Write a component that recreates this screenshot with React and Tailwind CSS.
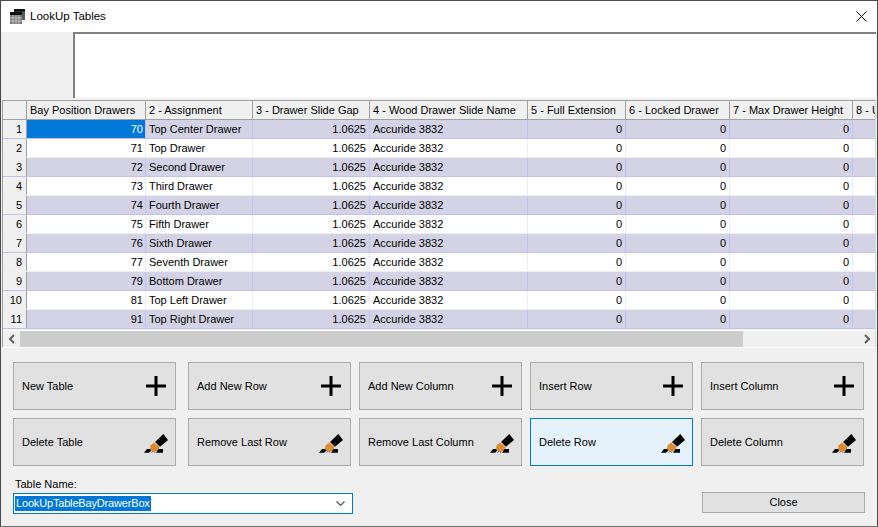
const columns = [
  { title: "Bay Position Drawers", w: "w-[119px]" },
  { title: "2 - Assignment", w: "w-[107px]" },
  { title: "3 - Drawer Slide Gap", w: "w-[117px]" },
  { title: "4 - Wood Drawer Slide Name", w: "w-[158px]" },
  { title: "5 - Full Extension", w: "w-[98px]" },
  { title: "6 - Locked Drawer", w: "w-[104px]" },
  { title: "7 - Max Drawer Height", w: "w-[123px]" },
  { title: "8 - Use", w: "flex-1" },
];

const rows = [
  [70, "Top Center Drawer"],
  [71, "Top Drawer"],
  [72, "Second Drawer"],
  [73, "Third Drawer"],
  [74, "Fourth Drawer"],
  [75, "Fifth Drawer"],
  [76, "Sixth Drawer"],
  [77, "Seventh Drawer"],
  [79, "Bottom Drawer"],
  [81, "Top Left Drawer"],
  [91, "Top Right Drawer"],
];

function Plus() {
  return (
    <svg width="20" height="20" viewBox="0 0 20 20" className="shrink-0">
      <path d="M8.5 0h3v20h-3z M0 8.5h20v3H0z" fill="#000" />
    </svg>
  );
}

function Eraser() {
  return (
    <svg width="24" height="19" viewBox="0 0 24 19" className="shrink-0 -mr-[2px] mt-[2px]">
      <path d="M11 8 L19.3 0 L24 6 L16 12.7 Z" fill="#000" />
      <path d="M10 8.5 L15.5 13 L14 16.5 L9.5 18 L6 15 L6.5 11.5 Z" fill="#df8b2e" />
      <path d="M3 15 H6 L7.5 16.5 L5 18.8 H0 Z" fill="#000" />
      <path d="M14.5 15 H19 V18.8 H12 Z" fill="#000" />
      <path d="M7.5 18.8 L8.8 17 M10.5 18.8 L11 17" stroke="#777" strokeWidth="1" />
    </svg>
  );
}

function ActionButton({ label, icon, active, className = "" }) {
  return (
    <div
      className={`h-[48px] w-[163px] flex items-center justify-between pl-[8px] pr-[9px] border ${
        active ? "border-[#0078d7] bg-[#e5f1fb]" : "border-[#adadad] bg-[#e1e1e1]"
      } ${className}`}
    >
      <span>{label}</span>
      {icon === "plus" ? <Plus /> : <Eraser />}
    </div>
  );
}

function Row({ index, data }) {
  const odd = index % 2 === 0;
  const line = odd ? "border-[#c2c2f2]" : "border-[#ededf5]";
  const bg = odd ? "bg-[#d4d3e6]" : "bg-white";
  const cell = `h-full shrink-0 border-r ${line} flex items-center overflow-hidden whitespace-nowrap`;
  return (
    <div className={`flex h-[19px] border-b ${line} ${bg}`}>
      <div className="h-full w-[24px] shrink-0 bg-[#f0f0f0] border-r border-[#a0a0a0] flex items-center justify-end pr-[4px]">
        {index + 1}
      </div>
      <div className={`${cell} ${columns[0].w} justify-end pr-[2px] ${index === 0 ? "bg-[#0078d7] text-white" : ""}`}>
        {data[0]}
      </div>
      <div className={`${cell} ${columns[1].w} pl-[3px]`}>{data[1]}</div>
      <div className={`${cell} ${columns[2].w} justify-end pr-[3px]`}>1.0625</div>
      <div className={`${cell} ${columns[3].w} pl-[3px]`}>Accuride 3832</div>
      <div className={`${cell} ${columns[4].w} justify-end pr-[3px]`}>0</div>
      <div className={`${cell} ${columns[5].w} justify-end pr-[3px]`}>0</div>
      <div className={`${cell} ${columns[6].w} justify-end pr-[3px]`}>0</div>
      <div className="flex-1" />
    </div>
  );
}

function Chevron({ dir }) {
  return (
    <svg width="8" height="10" viewBox="0 0 8 10">
      <path
        d={dir === "left" ? "M6 1 L2 5 L6 9" : "M2 1 L6 5 L2 9"}
        fill="none"
        stroke="#606060"
        strokeWidth="2"
      />
    </svg>
  );
}

export default function App() {
  return (
    <div
      className="w-[878px] h-[527px] bg-[#f0f0f0] border border-[#4a4a4a] border-b-[#707070] overflow-hidden flex flex-col text-[11px] leading-none text-black"
      style={{ fontFamily: '"Liberation Sans", Arial, sans-serif' }}
    >
      <div className="h-[31px] shrink-0 bg-white flex items-center pl-[9px] pr-[10px]">
        <svg width="16" height="15" viewBox="0 0 16 15" className="mr-[4px]">
          <rect x="4" y="0" width="11" height="11" fill="#5a5a5a" />
          <rect x="4" y="0" width="11" height="2.5" fill="#111" />
          <rect x="0" y="3" width="12" height="12" fill="#777" />
          <rect x="0" y="3" width="12" height="3" fill="#111" />
          <path d="M3 6v9M6 6v9M9 6v9M0 9h12M0 12h12" stroke="#d0d0d0" strokeWidth="0.8" />
        </svg>
        <span className="text-[11.5px]">LookUp Tables</span>
        <svg width="11" height="11" viewBox="0 0 11 11" className="ml-auto -mt-[1px]">
          <path d="M0.5 0.5 L10.5 10.5 M10.5 0.5 L0.5 10.5" stroke="#000" strokeWidth="1" />
        </svg>
      </div>

      <div className="h-[66px] shrink-0 ml-[72px] mr-[1px] bg-white border-t-2 border-l-2 border-t-[#808080] border-l-[#808080]" />

      <div className="h-[248px] shrink-0 mt-[2px] ml-[1px] mr-[1px] border border-[#a0a0a0] border-r-[#dcdcdc] border-b-[#ffffff] bg-[#f0f0f0] flex flex-col overflow-hidden">
        <div className="flex h-[19px] shrink-0 bg-[#f0f0f0] border-b border-[#a0a0a0]">
          <div className="w-[24px] shrink-0 border-r border-[#a0a0a0]" />
          {columns.map((c) => (
            <div
              key={c.title}
              className={`${c.w} ${c.w === "flex-1" ? "min-w-0" : "shrink-0 border-r border-[#a0a0a0]"} pl-[3px] flex items-center overflow-hidden whitespace-nowrap`}
            >
              {c.title}
            </div>
          ))}
        </div>
        {rows.map((r, i) => (
          <Row key={r[0]} index={i} data={r} />
        ))}
        <div className="mt-[1px] h-[17px] flex items-center bg-[#f0f0f0] border-t border-white">
          <div className="w-[17px] flex items-center justify-center">
            <Chevron dir="left" />
          </div>
          <div className="w-[723px] h-full bg-[#cdcdcd]" />
          <div className="flex-1" />
          <div className="w-[17px] flex items-center justify-center">
            <Chevron dir="right" />
          </div>
        </div>
      </div>

      <div className="flex flex-col pl-[12px] pr-[13px] mt-[14px] gap-[8px]">
        <div className="flex">
          <ActionButton label="New Table" icon="plus" className="mr-[12px]" />
          <div className="flex gap-[8px]">
            <ActionButton label="Add New Row" icon="plus" />
            <ActionButton label="Add New Column" icon="plus" />
            <ActionButton label="Insert Row" icon="plus" />
            <ActionButton label="Insert Column" icon="plus" />
          </div>
        </div>
        <div className="flex">
          <ActionButton label="Delete Table" icon="eraser" className="mr-[12px]" />
          <div className="flex gap-[8px]">
            <ActionButton label="Remove Last Row" icon="eraser" />
            <ActionButton label="Remove Last Column" icon="eraser" />
            <ActionButton label="Delete Row" icon="eraser" active />
            <ActionButton label="Delete Column" icon="eraser" />
          </div>
        </div>
      </div>

      <div className="flex items-end justify-between pl-[12px] pr-[12px] mt-[13px]">
        <div>
          <div className="ml-[2px] mb-[3px]">Table Name:</div>
          <div className="w-[340px] h-[21px] border border-[#0078d7] bg-white flex items-center pl-[1px] pr-[7px]">
            <span className="bg-[#0078d7] text-white px-[1px] h-[15px] flex items-center tracking-[-0.17px]">LookUpTableBayDrawerBox</span>
            <svg width="9" height="6" viewBox="0 0 9 6" className="ml-auto">
              <path d="M0.5 0.5 L4.5 4.5 L8.5 0.5" fill="none" stroke="#555" strokeWidth="1.2" />
            </svg>
          </div>
        </div>
        <div className="w-[163px] h-[21px] mb-[1px] border border-[#adadad] bg-[#e1e1e1] flex items-center justify-center">
          Close
        </div>
      </div>
    </div>
  );
}
